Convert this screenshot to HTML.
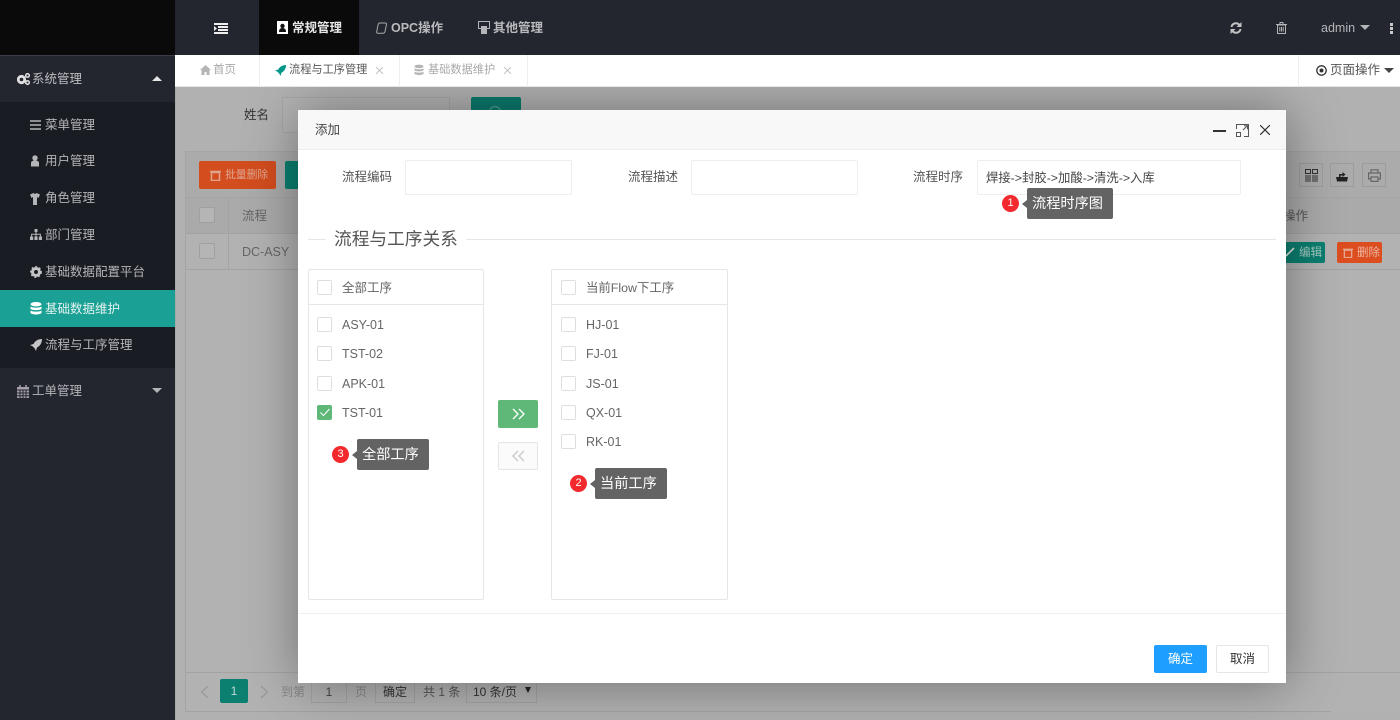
<!DOCTYPE html>
<html lang="zh-CN"><head><meta charset="utf-8"><title>流程与工序管理</title>
<style>
*{box-sizing:border-box}
html,body{margin:0;padding:0;width:1400px;height:720px;overflow:hidden;background:#b0b0b0}
body{font-family:"Liberation Sans","Noto Sans CJK SC",sans-serif;font-size:12px;color:#666;position:relative}
.a{position:absolute;white-space:nowrap}
.t{position:absolute;white-space:nowrap;line-height:18px}
svg{position:absolute;display:block}
.ck{position:absolute;width:15px;height:15px;background:#fff;border:1px solid #dedede;border-radius:2px}
.inp{position:absolute;background:#fff;border:1px solid #eee;border-radius:2px}
.tip{position:absolute;background:#636363;color:#fff;font-size:14.2px;border-radius:2px;padding-left:5px}
.tip:before{content:"";position:absolute;left:-5px;top:50%;margin-top:-4px;border-right:5px solid #636363;border-top:4px solid transparent;border-bottom:4px solid transparent}
.bd{position:absolute;width:17px;height:17px;border-radius:50%;background:#f22a2e;color:#fff;font-size:11px;line-height:17px;text-align:center}
.s{color:#b4b5b8;font-size:12.5px}
.li{position:absolute;font-size:12.5px;color:#666;line-height:16px}
</style></head><body>
<!-- top bar -->
<div class="a" style="left:0;top:0;width:175px;height:55px;background:#0a0a0a"></div>
<div class="a" style="left:175px;top:0;width:1225px;height:55px;background:#23262f"></div>
<div class="a" style="left:259px;top:0;width:100px;height:55px;background:#0a0a0a"></div>
<svg style="left:214px;top:23px" width="14" height="11" viewBox="0 0 14 11"><path d="M0 1h14M4 4h10M4 7h10M0 10h14" stroke="#eee" stroke-width="2"/><path d="M0 3v5l3-2.500z" fill="#eee"/></svg>
<svg style="left:277px;top:21px" width="11" height="13" viewBox="0 0 11 13"><path fill="#fff" d="M0 0h11v13H0z"/><circle cx="5.500" cy="5" r="2.200" fill="#111"/><path fill="#111" d="M2 11c0-3 1.500-4 3.500-4s3.500 1 3.500 4z"/></svg>
<div class="t" style="left:292px;top:19px;color:#e8e8e8;font-size:12.500px;font-weight:bold">常规管理</div>
<svg style="left:376px;top:22px" width="11" height="12" viewBox="0 0 11 12"><path fill="none" stroke="#aaa" d="M3.500 1h6a1 1 0 0 1 1 1.200L9 9.500c-.4 1.200-1 1.800-2 1.800H2a1.200 1.200 0 0 1-1.300-1.500L2 3c.3-1.300.7-2 1.500-2z"/></svg>
<div class="t" style="left:391px;top:19px;color:#b9babd;font-size:12.500px;font-weight:bold">OPC操作</div>
<svg style="left:478px;top:21px" width="12" height="13" viewBox="0 0 12 13"><path fill="none" stroke="#b4b5b8" d="M.5.500h11v7h-11z"/><path fill="#b4b5b8" d="M3 5h6v8H3z"/></svg>
<div class="t" style="left:493px;top:19px;color:#b9babd;font-size:12.500px;font-weight:bold">其他管理</div>
<svg style="left:1230px;top:22px" width="12" height="12" viewBox="0 0 12 12"><path fill="none" stroke="#c2c3c5" stroke-width="2" d="M1.500 5A4.500 4.500 0 0 1 9.500 3M10.500 7A4.500 4.500 0 0 1 2.500 9"/><path fill="#c2c3c5" d="M11.500 0v5h-5zM.5 12V7h5z"/></svg>
<svg style="left:1276px;top:22px" width="11" height="12" viewBox="0 0 11 12"><path fill="none" stroke="#b4b5b8" d="M1.500 3h8v8.500h-8zM0 2.500h11M4 2.500V.5h3v2M3.800 5v4.500M5.500 5v4.500M7.200 5v4.500"/></svg>
<div class="t" style="left:1321px;top:19px;color:#b4b5b8;font-size:12.500px">admin</div>
<div class="a" style="left:1360px;top:25px;border-top:5px solid #b4b5b8;border-left:5px solid transparent;border-right:5px solid transparent"></div>
<div class="a" style="left:1390px;top:23px;width:3px;height:3px;background:#c9c9c9;box-shadow:0 4px 0 #c9c9c9,0 8px 0 #c9c9c9"></div>
<!-- sidebar -->
<div class="a" style="left:0;top:55px;width:175px;height:665px;background:#23262f;border-top:1px solid #3a3d45"></div>
<div class="a" style="left:0;top:102px;width:175px;height:266px;background:#1a1c23"></div>
<div class="a" style="left:0;top:290px;width:175px;height:37px;background:#1aa094"></div>
<svg style="left:17px;top:73px" width="13" height="12" viewBox="0 0 13 12"><circle cx="4.500" cy="6.500" r="3.200" fill="none" stroke="#e0e0e1" stroke-width="2.800"/><circle cx="10.500" cy="2.500" r="1.800" fill="none" stroke="#e0e0e1" stroke-width="1.500"/><circle cx="10.500" cy="9.500" r="1.800" fill="none" stroke="#e0e0e1" stroke-width="1.500"/></svg>
<div class="t s" style="left:32px;top:70px;color:#bdbec1">系统管理</div>
<div class="a" style="left:152px;top:76px;border-bottom:5px solid #e6e6e6;border-left:5px solid transparent;border-right:5px solid transparent"></div>
<svg style="left:30px;top:120px" width="11" height="10" viewBox="0 0 11 10"><path d="M0 1h11M0 5h11M0 9h11" stroke="#b4b5b8" stroke-width="1.500"/></svg>
<div class="t s" style="left:45px;top:116px">菜单管理</div>
<svg style="left:30px;top:155px" width="10" height="12" viewBox="0 0 10 12"><circle cx="5" cy="3" r="2.700" fill="#b4b5b8"/><path fill="#b4b5b8" d="M1 11.500V8c0-1.500 1.500-2.500 4-2.500S9 6.500 9 8v3.500z"/></svg>
<div class="t s" style="left:45px;top:152px">用户管理</div>
<svg style="left:30px;top:193px" width="10" height="12" viewBox="0 0 10 12"><path fill="#b4b5b8" d="M0 1.500L3.500 0 5 1 6.500 0 10 1.500 8.500 5 7 4v8H3V4L1.500 5z"/></svg>
<div class="t s" style="left:45px;top:189px">角色管理</div>
<svg style="left:30px;top:229px" width="12" height="11" viewBox="0 0 12 11"><path fill="#b4b5b8" d="M4.500 0h3v3h-3zM0 7.500h3.200V11H0zM4.400 7.500h3.200V11H4.400zM8.800 7.500H12V11H8.800z"/><path fill="none" stroke="#b4b5b8" d="M6 3v4.500M1.600 7.500V5.200h8.800v2.300"/></svg>
<div class="t s" style="left:45px;top:226px">部门管理</div>
<svg style="left:30px;top:266px" width="12" height="12" viewBox="0 0 12 12"><circle cx="6" cy="6" r="3.500" fill="none" stroke="#c4c5c7" stroke-width="3"/><circle cx="6" cy="6" r="5.300" fill="none" stroke="#c4c5c7" stroke-width="1.200" stroke-dasharray="2 2"/></svg>
<div class="t s" style="left:45px;top:263px">基础数据配置平台</div>
<svg style="left:30px;top:302px" width="12" height="13" viewBox="0 0 12 13"><ellipse cx="6" cy="2.200" rx="5.500" ry="2.200" fill="#fff"/><path fill="#fff" d="M.5 4.500C2 6 10 6 11.500 4.500V7C10 8.500 2 8.500.5 7zM.5 8.500C2 10 10 10 11.500 8.500V11C10 13 2 13 .5 11z"/></svg>
<div class="t s" style="left:45px;top:300px;color:#e6f3f1">基础数据维护</div>
<svg style="left:30px;top:339px" width="12" height="12" viewBox="0 0 12 12"><path fill="#c4c5c7" d="M12 0C8 0 5 2 3.500 5L0 6l2.500 1.200 2.300 2.300L6 12l1-3.500C10 7 12 4 12 0z"/></svg>
<div class="t s" style="left:45px;top:336px">流程与工序管理</div>
<svg style="left:17px;top:385px" width="12" height="13" viewBox="0 0 12 13"><path fill="#a6a0ad" d="M0 2h12v11H0z"/><path stroke="#23262f" d="M0 5h12M0 8h12M0 10.700h12M3 5v8M6 5v8M9 5v8" fill="none"/><path stroke="#a6a0ad" stroke-width="1.500" d="M3 0v3M9 0v3"/></svg>
<div class="t s" style="left:32px;top:382px">工单管理</div>
<div class="a" style="left:152px;top:388px;border-top:5px solid #b4b5b8;border-left:5px solid transparent;border-right:5px solid transparent"></div>
<!-- tabs -->
<div class="a" style="left:175px;top:55px;width:1225px;height:32px;background:#fff;border-bottom:1px solid #e6e6e6"></div>
<div class="a" style="left:259px;top:55px;width:1px;height:32px;background:#eee"></div>
<div class="a" style="left:399px;top:55px;width:1px;height:32px;background:#eee"></div>
<div class="a" style="left:527px;top:55px;width:1px;height:32px;background:#eee"></div>
<div class="a" style="left:1298px;top:55px;width:1px;height:32px;background:#eee"></div>
<svg style="left:200px;top:65px" width="11" height="10" viewBox="0 0 11 10"><path fill="#b5b5b5" d="M5.500 0L11 5H9.500v5H6.500V7h-2v3h-3V5H0z"/></svg>
<div class="t" style="left:213px;top:61px;color:#a8a8a8;font-size:11.500px">首页</div>
<svg style="left:275px;top:65px" width="11" height="11" viewBox="0 0 12 12"><path fill="#009688" d="M12 0C8 0 5 2 3.500 5L0 6l2.500 1.200 2.300 2.300L6 12l1-3.500C10 7 12 4 12 0z"/></svg>
<div class="t" style="left:289px;top:61px;color:#555;font-size:11.200px">流程与工序管理</div>
<svg style="left:376px;top:67px" width="7" height="7" viewBox="0 0 7 7"><path stroke="#c4c4c4" d="M0 0l7 7M7 0L0 7"/></svg>
<svg style="left:414px;top:64px" width="10" height="12" viewBox="0 0 12 13"><ellipse cx="6" cy="2.200" rx="5.500" ry="2.200" fill="#b5b5b5"/><path fill="#b5b5b5" d="M.5 4.500C2 6 10 6 11.500 4.500V7C10 8.500 2 8.500.5 7zM.5 8.500C2 10 10 10 11.500 8.500V11C10 13 2 13 .5 11z"/></svg>
<div class="t" style="left:428px;top:61px;color:#a8a8a8;font-size:11.200px">基础数据维护</div>
<svg style="left:504px;top:67px" width="7" height="7" viewBox="0 0 7 7"><path stroke="#c4c4c4" d="M0 0l7 7M7 0L0 7"/></svg>
<svg style="left:1316px;top:65px" width="11" height="11" viewBox="0 0 11 11"><circle cx="5.500" cy="5.500" r="4.700" fill="none" stroke="#333" stroke-width="1.300"/><circle cx="5.500" cy="5.500" r="2" fill="#333"/></svg>
<div class="t" style="left:1330px;top:61px;color:#555;font-size:12.500px">页面操作</div>
<div class="a" style="left:1384px;top:68px;border-top:5px solid #444;border-left:5px solid transparent;border-right:5px solid transparent"></div>
<!-- main dimmed area -->
<div class="a" style="left:175px;top:87px;width:1225px;height:633px;overflow:hidden;background:#b1b1b1">
  <div style="position:absolute;left:0;top:0;width:1px;height:633px;background:#a8a8a8"></div>
  <div class="t" style="left:69px;top:19px;color:#333;font-size:12.500px">姓名</div>
  <div style="position:absolute;left:107px;top:10px;width:168px;height:36px;border:1px solid #a6a6a6;background:#b3b3b3;border-radius:2px"></div>
  <div style="position:absolute;left:296px;top:10px;width:50px;height:30px;background:#0b7a6d;border-radius:2px"></div>
  <svg style="left:313px;top:18px" width="14" height="8" viewBox="0 0 14 8"><path fill="none" stroke="#4f9e93" stroke-width="1.300" d="M1.500 7a5.500 5.500 0 0 1 11 0"/></svg>
  <!-- panel -->
  <div style="position:absolute;left:10px;top:64px;width:1230px;height:561px;border:1px solid #a6a6a6;border-bottom:0;background:#b2b2b2"></div>
  <div style="position:absolute;left:10px;top:624px;width:1146px;height:1px;background:#a3a3a3"></div>
  <div style="position:absolute;left:11px;top:65px;width:1214px;height:46px;background:#ababab;border-bottom:1px solid #a3a3a3"></div>
  <div style="position:absolute;left:11px;top:111px;width:1214px;height:36px;background:#aaa;border-bottom:1px solid #a3a3a3"></div>
  <div style="position:absolute;left:11px;top:147px;width:1214px;height:36px;border-bottom:1px solid #a3a3a3"></div>
  <div style="position:absolute;left:53px;top:111px;width:1px;height:72px;background:#a3a3a3"></div>
  <div style="position:absolute;left:24px;top:74px;width:77px;height:28px;background:#d34d1e;border-radius:2px"></div>
  <svg style="left:35px;top:82px" width="11" height="12" viewBox="0 0 11 12"><path fill="none" stroke="#e0a58f" stroke-width="1.500" d="M1.500 3.500h8v8h-8zM0 2.500h11"/></svg>
  <div class="t" style="left:50px;top:79px;color:#e0a58f;font-size:10.800px">批量删除</div>
  <div style="position:absolute;left:110px;top:74px;width:40px;height:28px;background:#0b7f70;border-radius:2px"></div>
  <div style="position:absolute;left:24px;top:120px;width:16px;height:16px;border:1px solid #a0a0a0;background:#b5b5b5;border-radius:2px"></div>
  <div class="t" style="left:67px;top:120px;color:#666;font-size:12.500px">流程</div>
  <div style="position:absolute;left:24px;top:156px;width:16px;height:16px;border:1px solid #a0a0a0;background:#b5b5b5;border-radius:2px"></div>
  <div class="t" style="left:67px;top:156px;color:#666;font-size:12.500px">DC-ASY</div>
  <div style="position:absolute;left:1124px;top:76px;width:24px;height:24px;border:1px solid #9c9c9c"></div>
  <svg style="left:1130px;top:82px" width="13" height="13" viewBox="0 0 13 13"><path fill="none" stroke="#333" d="M.5.500h5v4h-5zM7.500.500h5v4h-5zM1 6v7M3 6v7M5 6v7M8 6v7M10 6v7M12 6v7"/></svg>
  <div style="position:absolute;left:1155px;top:76px;width:24px;height:24px;border:1px solid #9c9c9c"></div>
  <svg style="left:1160px;top:82px" width="14" height="13" viewBox="0 0 14 13"><path fill="#222" d="M1 8h12l-1 4.500H2z"/><path fill="#222" d="M4 8V5h3.500V3l3 2.500-3 2.500V6.500H5.500V8z"/></svg>
  <div style="position:absolute;left:1187px;top:76px;width:24px;height:24px;border:1px solid #9c9c9c"></div>
  <svg style="left:1193px;top:82px" width="13" height="13" viewBox="0 0 13 13"><path fill="none" stroke="#666" stroke-width="1.200" d="M3 4V.8h7V4M3 10H.6V4h11.800v6H10M3 8h7v4.400H3z"/></svg>
  <div class="t" style="left:1108px;top:120px;color:#555;font-size:12.500px">操作</div>
  <div style="position:absolute;left:1100px;top:155px;width:50px;height:21px;background:#0b7f70;border-radius:2px"></div>
  <svg style="left:1110px;top:160px" width="10" height="10" viewBox="0 0 10 10"><path stroke="#dfe9e6" stroke-width="1.600" d="M1 9L9 1"/></svg>
  <div class="t" style="left:1124px;top:157px;color:#a9cbc5;font-size:11.500px">编辑</div>
  <div style="position:absolute;left:1162px;top:155px;width:45px;height:21px;background:#dc4e1f;border-radius:2px"></div>
  <svg style="left:1168px;top:160px" width="10" height="11" viewBox="0 0 11 12"><path fill="none" stroke="#e8a58f" stroke-width="1.500" d="M1.500 3.500h8v8h-8zM0 2.500h11"/></svg>
  <div class="t" style="left:1182px;top:157px;color:#ecb6a4;font-size:11.500px">删除</div>
  <!-- pager -->
  <div style="position:absolute;left:11px;top:585px;width:1214px;height:1px;background:#a3a3a3"></div>
  <svg style="left:25px;top:598px" width="9" height="14" viewBox="0 0 9 14"><path fill="none" stroke="#999" stroke-width="1.200" d="M8 1L1.500 7 8 13"/></svg>
  <div style="position:absolute;left:45px;top:592px;width:28px;height:24px;background:#0b7f70;border-radius:2px;color:#bfd9d4;text-align:center;line-height:24px;font-size:12px">1</div>
  <svg style="left:85px;top:598px" width="9" height="14" viewBox="0 0 9 14"><path fill="none" stroke="#999" stroke-width="1.200" d="M1 1l6.500 6L1 13"/></svg>
  <div class="t" style="left:106px;top:596px;color:#888">到第</div>
  <div style="position:absolute;left:136px;top:592px;width:36px;height:24px;border:1px solid #a3a3a3;text-align:center;line-height:24px;color:#444">1</div>
  <div class="t" style="left:180px;top:596px;color:#888">页</div>
  <div style="position:absolute;left:200px;top:592px;width:40px;height:24px;border:1px solid #a3a3a3;text-align:center;line-height:24px;color:#333">确定</div>
  <div class="t" style="left:248px;top:596px;color:#555">共 1 条</div>
  <div style="position:absolute;left:291px;top:592px;width:71px;height:24px;border:1px solid #a3a3a3;line-height:24px;color:#333;padding-left:6px">10 条/页</div>
  <div style="position:absolute;left:350px;top:600px;border-top:6px solid #222;border-left:3px solid transparent;border-right:3px solid transparent"></div>
  <!-- modal -->
  <div style="position:absolute;left:123px;top:23px;width:988px;height:573px;background:#fff;box-shadow:1px 1px 50px rgba(0,0,0,.38)"></div>
</div>
<!-- modal contents (page coordinates) -->
<div class="a" style="left:298px;top:110px;width:988px;height:40px;background:#f8f8f8;border-bottom:1px solid #eee"></div>
<div class="t" style="left:315px;top:121px;color:#444;font-size:12.500px">添加</div>
<div class="a" style="left:1213px;top:130px;width:13px;height:2px;background:#333"></div>
<svg style="left:1236px;top:124px" width="13" height="13" viewBox="0 0 13 13"><path fill="none" stroke="#555" d="M.5 5V.5h12v12H8M.5 8.500h4v4h-4zM7 6l4.500-4.500M8 1.700h3.500v3.500"/></svg>
<svg style="left:1260px;top:125px" width="10" height="10" viewBox="0 0 10 10"><path stroke="#333" stroke-width="1.200" d="M0 0l10 10M10 0L0 10"/></svg>
<div class="t" style="left:342px;top:168px;color:#555;font-size:12.500px">流程编码</div>
<div class="inp" style="left:405px;top:160px;width:167px;height:35px"></div>
<div class="t" style="left:628px;top:168px;color:#555;font-size:12.500px">流程描述</div>
<div class="inp" style="left:691px;top:160px;width:167px;height:35px"></div>
<div class="t" style="left:913px;top:168px;color:#555;font-size:12.500px">流程时序</div>
<div class="inp" style="left:977px;top:160px;width:264px;height:35px"></div>
<div class="t" style="left:986px;top:169px;color:#444;font-size:12.350px">焊接-&gt;封胶-&gt;加酸-&gt;清洗-&gt;入库</div>
<div class="a" style="left:308px;top:239px;width:18px;height:1px;background:#e6e6e6"></div>
<div class="a" style="left:466px;top:239px;width:810px;height:1px;background:#e6e6e6"></div>
<div class="t" style="left:334px;top:230px;color:#555;font-size:17.700px">流程与工序关系</div>
<!-- transfer left -->
<div class="a" style="left:308px;top:269px;width:176px;height:331px;background:#fff;border:1px solid #e6e6e6;border-radius:2px"></div>
<div class="a" style="left:308px;top:304px;width:176px;height:1px;background:#e6e6e6"></div>
<div class="ck" style="left:317px;top:280px"></div>
<div class="t" style="left:342px;top:279px;color:#666;font-size:12.500px">全部工序</div>
<div class="ck" style="left:317px;top:317px"></div><div class="li" style="left:342px;top:317px">ASY-01</div>
<div class="ck" style="left:317px;top:346px"></div><div class="li" style="left:342px;top:346px">TST-02</div>
<div class="ck" style="left:317px;top:376px"></div><div class="li" style="left:342px;top:376px">APK-01</div>
<div class="ck" style="left:317px;top:405px;background:#5fb878;border-color:#5fb878"></div>
<svg style="left:320px;top:408px" width="10" height="9" viewBox="0 0 10 9"><path fill="none" stroke="#fff" d="M.5 4.500L3.500 7.500 9.500 1"/></svg>
<div class="li" style="left:342px;top:405px">TST-01</div>
<div class="bd" style="left:332px;top:446px">3</div>
<div class="tip" style="left:357px;top:439px;width:72px;height:31px;line-height:33px">全部工序</div>
<!-- buttons -->
<div class="a" style="left:498px;top:400px;width:40px;height:28px;background:#5fb878;border-radius:2px"></div>
<svg style="left:512px;top:408px" width="13" height="12" viewBox="0 0 13 12"><path fill="none" stroke="#fff" stroke-width="1.300" d="M1 1l5 5-5 5M7 1l5 5-5 5"/></svg>
<div class="a" style="left:498px;top:442px;width:40px;height:28px;background:#fbfbfb;border:1px solid #e6e6e6;border-radius:2px"></div>
<svg style="left:512px;top:450px" width="13" height="12" viewBox="0 0 13 12"><path fill="none" stroke="#c8c8c8" stroke-width="1.300" d="M6 1L1 6l5 5M12 1L7 6l5 5"/></svg>
<!-- transfer right -->
<div class="a" style="left:551px;top:269px;width:177px;height:331px;background:#fff;border:1px solid #e6e6e6;border-radius:2px"></div>
<div class="a" style="left:551px;top:304px;width:177px;height:1px;background:#e6e6e6"></div>
<div class="ck" style="left:561px;top:280px"></div>
<div class="t" style="left:586px;top:279px;color:#666;font-size:12.400px">当前Flow下工序</div>
<div class="ck" style="left:561px;top:317px"></div><div class="li" style="left:586px;top:317px">HJ-01</div>
<div class="ck" style="left:561px;top:346px"></div><div class="li" style="left:586px;top:346px">FJ-01</div>
<div class="ck" style="left:561px;top:376px"></div><div class="li" style="left:586px;top:376px">JS-01</div>
<div class="ck" style="left:561px;top:405px"></div><div class="li" style="left:586px;top:405px">QX-01</div>
<div class="ck" style="left:561px;top:434px"></div><div class="li" style="left:586px;top:434px">RK-01</div>
<div class="bd" style="left:570px;top:475px">2</div>
<div class="tip" style="left:595px;top:468px;width:72px;height:31px;line-height:33px">当前工序</div>
<!-- tooltip 1 -->
<div class="bd" style="left:1002px;top:195px">1</div>
<div class="tip" style="left:1027px;top:188px;width:86px;height:31px;line-height:33px">流程时序图</div>
<!-- footer -->
<div class="a" style="left:298px;top:613px;width:988px;height:1px;background:#f0f0f0"></div>
<div class="a" style="left:1154px;top:645px;width:53px;height:28px;background:#1e9fff;border-radius:2px;color:#fff;text-align:center;line-height:28px;font-size:12.500px">确定</div>
<div class="a" style="left:1216px;top:645px;width:53px;height:28px;background:#fff;border:1px solid #e6e6e6;border-radius:2px;color:#333;text-align:center;line-height:26px;font-size:12.500px">取消</div>
</body></html>
